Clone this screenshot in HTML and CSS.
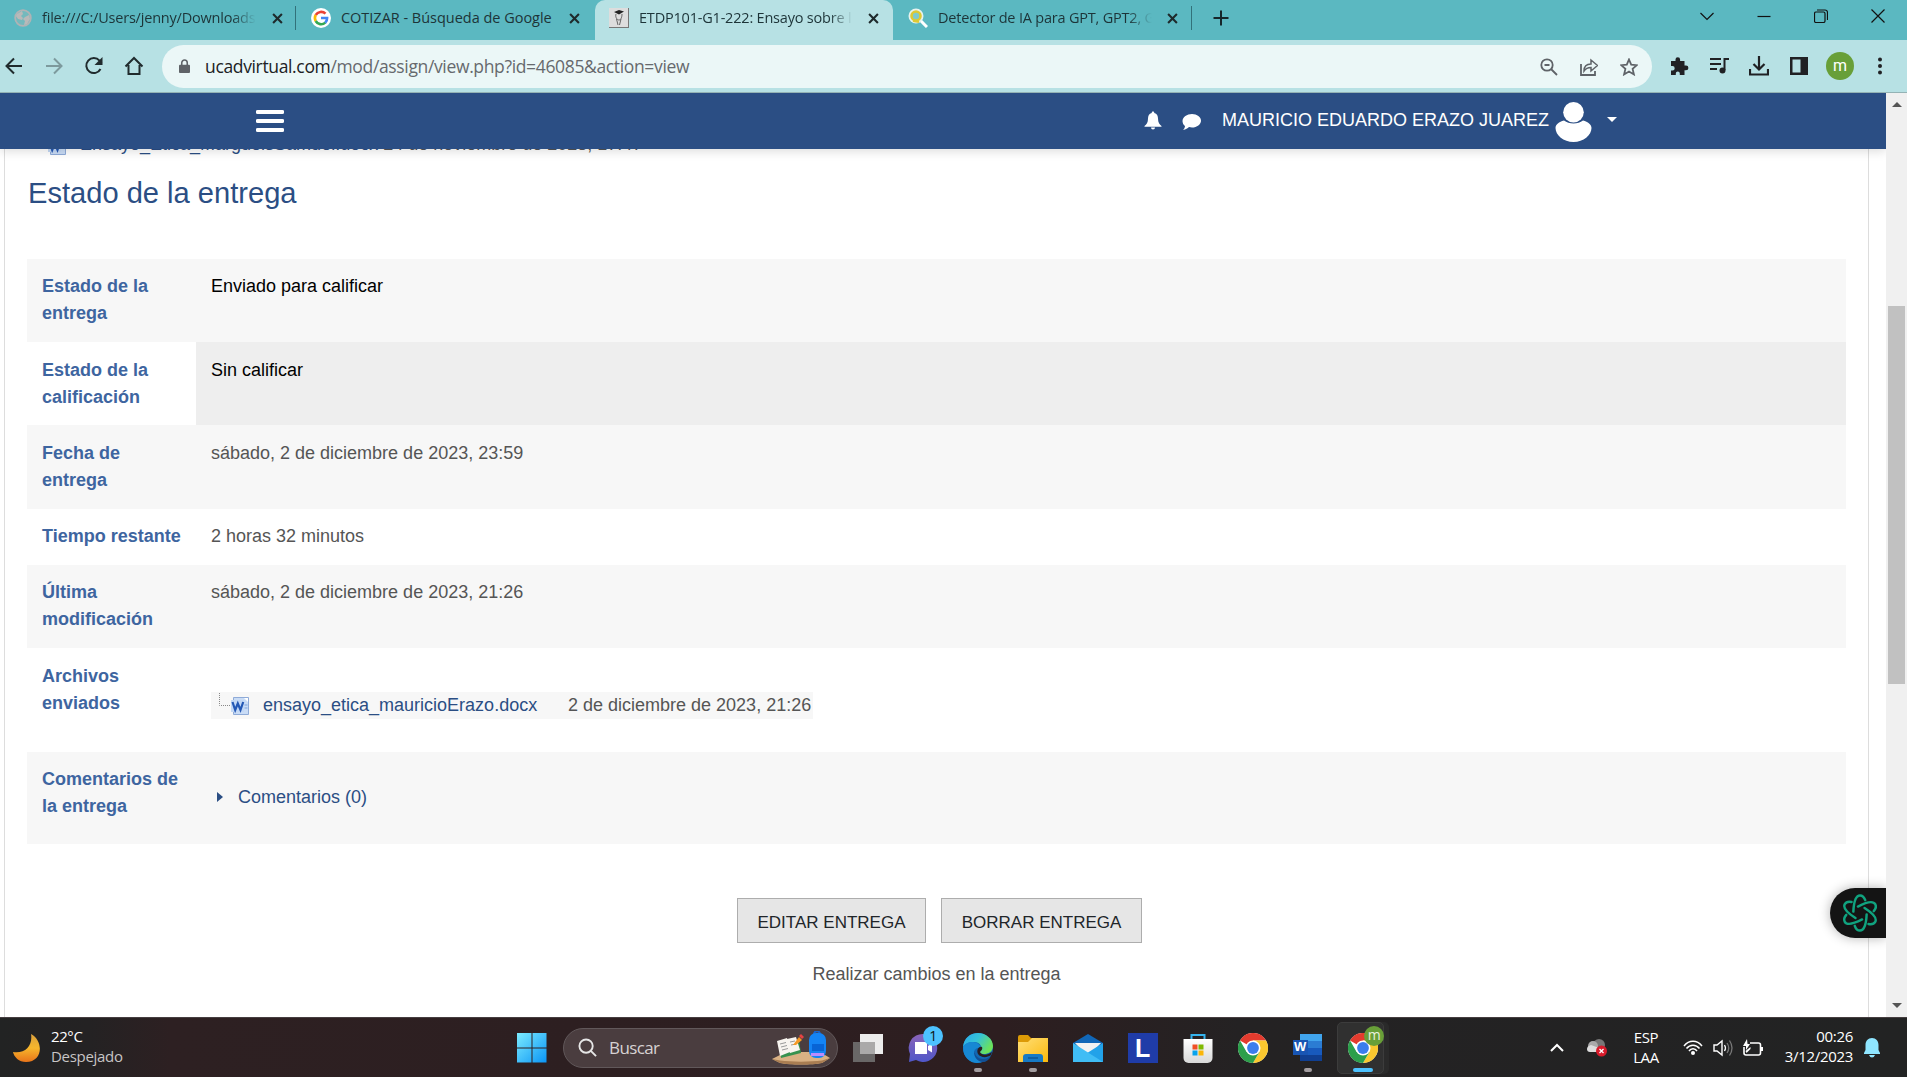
FILE: index.html
```html
<!DOCTYPE html>
<html lang="es">
<head>
<meta charset="utf-8">
<title>ETDP101-G1-222: Ensayo sobre</title>
<link rel="stylesheet" href="styles.css">
</head>
<body>
<svg width="0" height="0" class="defs">
  <defs>
    <linearGradient id="moon" x1="0" y1="0" x2="0" y2="1"><stop offset="0" stop-color="#d9a03c"/><stop offset=".5" stop-color="#f6b62c"/><stop offset="1" stop-color="#e8741a"/></linearGradient>
    <linearGradient id="win" x1="0" y1="0" x2="1" y2="1"><stop offset="0" stop-color="#7cecff"/><stop offset="1" stop-color="#0a94f5"/></linearGradient>
    <linearGradient id="chat" x1="0" y1="0" x2="0" y2="1"><stop offset="0" stop-color="#8a63b8"/><stop offset="1" stop-color="#5057c9"/></linearGradient>
    <linearGradient id="edgeTop" x1="0" y1="0" x2="1" y2=".5"><stop offset="0" stop-color="#2aa8ee"/><stop offset=".5" stop-color="#35c3d8"/><stop offset="1" stop-color="#6be25a"/></linearGradient>
    <linearGradient id="folder" x1="0" y1="0" x2="1" y2="1"><stop offset="0" stop-color="#ffdf78"/><stop offset="1" stop-color="#fbb90d"/></linearGradient>
    <linearGradient id="store" x1="0" y1="0" x2="0" y2="1"><stop offset="0" stop-color="#fff"/><stop offset="1" stop-color="#d8d8d8"/></linearGradient>
    <symbol id="chrome" viewBox="0 0 30 30">
      <circle cx="15" cy="15" r="15" fill="#fff"/>
      <path d="M15 15 2 7.500A15 15 0 0 1 28 7.500H15Z" fill="#e33b2e"/>
      <path d="M28 7.500A15 15 0 0 1 15 30L21.500 18.700 15 7.500Z" fill="#fbc82f"/>
      <path d="M2 7.500A15 15 0 0 0 15 30L21.500 18.700 8.500 18.700Z" fill="#2c9f4b"/>
      <circle cx="15" cy="15" r="7.500" fill="#fff"/><circle cx="15" cy="15" r="5.900" fill="#3b7ded"/>
    </symbol>
    <symbol id="close" viewBox="0 0 10 10"><path d="M1 1l8 8M9 1l-8 8" stroke="#1e2a2c" stroke-width="1.900"/></symbol>
    <symbol id="worddoc" viewBox="0 0 18 18">
      <path d="M2.500.5h15v17h-15z" fill="#c9dcf6" stroke="#8fabd8"/><path d="M13 1h4v4z" fill="#fff"/><path d="M13.500 8h3M13.500 11h3" stroke="#7fa4dd"/>
      <path d="M0 3h13v12H0z" fill="#c3d8f5"/><path d="M1.500 5l2.700 8 2.600-6.500L9.500 13l2.700-8" fill="none" stroke="#2458b5" stroke-width="2.200"/>
    </symbol>
  </defs>
</svg>

<header class="browser">
  <div class="tabs">
    <div class="tab first">
      <svg class="fav" viewBox="0 0 18 18"><circle cx="9" cy="9" r="7.800" fill="#74b9bd" stroke="#b0b3b5" stroke-width="1.800"/><path d="M3 5l5-3 1 3-2 2 2 2-1 2-4-1-2-3zM11 8l4-2 1 4-3 5-3 1 1-4-2-2z" fill="#b9b9b9"/></svg>
      <span class="tab-title t1">file:///C:/Users/jenny/Downloads</span><svg class="x"><use href="#close"/></svg>
    </div>
    <div class="tab">
      <svg class="fav big" viewBox="0 0 20 20"><circle cx="10" cy="10" r="10" fill="#fff"/><g fill="none" stroke-width="2.600"><path d="M4.700 7A6.200 6.200 0 0 1 14.500 5.700" stroke="#ea4335"/><path d="M4.700 7a6.200 6.200 0 0 0 0 6" stroke="#fbbc05"/><path d="M4.700 13a6.200 6.200 0 0 0 9.600 1.600" stroke="#34a853"/><path d="M10 10h6.100a6.200 6.200 0 0 1-1.900 4.700" stroke="#4285f4"/></g></svg>
      <span class="tab-title t2">COTIZAR - Búsqueda de Google</span><svg class="x"><use href="#close"/></svg>
    </div>
    <div class="tab active">
      <svg class="fav big" viewBox="0 0 20 20"><path d="M0 0h20v20H0z" fill="#ddd"/><path d="M0 19.500h20M19.500 0v20" stroke="#777"/><path d="M5 4l5-2 5 1.500-5 3z" fill="#222"/><path d="M7 6c-1 3 1 6 3 6s3-3 3-6M7.500 11l1.500 6M12 11l-1.500 6" fill="none" stroke="#666"/></svg>
      <span class="tab-title t3">ETDP101-G1-222: Ensayo sobre l</span><svg class="x"><use href="#close"/></svg>
    </div>
    <div class="tab last">
      <svg class="fav big" viewBox="0 0 20 20"><path d="M12 12l7 7" stroke="#fff" stroke-width="3"/><circle cx="8" cy="8" r="7.500" fill="#e7f3ef"/><circle cx="8" cy="8" r="4.500" fill="#7fcaca" stroke="#ddc934" stroke-width="2.600"/><path d="M5 13l6 1" stroke="#ddc934" stroke-width="2"/></svg>
      <span class="tab-title t4">Detector de IA para GPT, GPT2, G</span><svg class="x"><use href="#close"/></svg>
    </div>
    <svg class="newtab" viewBox="0 0 16 16"><path d="M8 .5v15M.5 8h15" stroke="#16262a" stroke-width="2"/></svg>
    <div class="winctl">
      <svg viewBox="0 0 14 14"><path d="M.5 4l6.500 6.500L13.500 4"/></svg>
      <svg viewBox="0 0 14 14"><path d="M.5 7.500h13"/></svg>
      <svg viewBox="0 0 14 14"><rect x=".5" y="3" width="10.500" height="10.500" rx="1.500"/><path d="M3 1h8a2.500 2.500 0 0 1 2.500 2.500v7.500"/></svg>
      <svg viewBox="0 0 14 14"><path d="M.5.5l13 13M13.500.5l-13 13"/></svg>
    </div>
  </div>

  <div class="toolbar">
    <div class="nav-icons">
      <svg viewBox="0 0 20 20"><path d="M18 10H3M10 2.500L2.500 10l7.500 7.500"/></svg>
      <svg viewBox="0 0 20 20" class="dim"><path d="M2 10h15M10 2.500l7.500 7.500-7.500 7.500"/></svg>
      <svg viewBox="0 0 20 20"><path d="M16.500 13A7.500 7.500 0 1 1 15.500 4.700L17.500 7"/><path d="M18.500 1v8h-8z" fill="#202b2d" stroke="none"/></svg>
      <svg viewBox="0 0 20 20"><path d="M1.500 10.500L10 2l8.500 8.500M4.500 9v9h11V9"/></svg>
    </div>
    <div class="omnibox">
      <svg class="lock" viewBox="0 0 12 16"><path d="M1 6h10a1 1 0 0 1 1 1v7a1 1 0 0 1-1 1H1a1 1 0 0 1-1-1V7a1 1 0 0 1 1-1z" fill="#5f6368"/><path d="M3 7V4a3 3 0 0 1 6 0v3" fill="none" stroke="#5f6368" stroke-width="1.700"/></svg>
      <span class="url"><b>ucadvirtual.com</b>/mod/assign/view.php?id=46085&amp;action=view</span>
      <span class="omni-icons">
        <svg viewBox="0 0 18 18"><circle cx="7" cy="7" r="5.700"/><path d="M11 11l6 6M4.500 7h5"/></svg>
        <svg viewBox="0 0 18 18"><path d="M1 6v11h14v-4"/><path d="M4 13c0-5 3-7 7-7V2l6.500 5.500L11 13V9.500c-3 0-5 .5-7 3.500z" stroke-width="1.500"/></svg>
        <svg viewBox="0 0 18 18"><path d="M9 1.500l2.200 5.200 5.600.5-4.200 3.700 1.300 5.500L9 13.500l-4.900 2.900 1.300-5.500L1.200 7.200l5.600-.5z"/></svg>
      </span>
    </div>
    <div class="ext-icons">
      <svg viewBox="0 0 20 20"><path d="M2 5h4.500V3.500a2.300 2.300 0 0 1 4.600 0V5h4.400v4.500H17a2.400 2.400 0 0 1 0 4.800h-1.500V19h-4.700v-1.500a2 2 0 0 0-4 0V19H2v-4.500h1.500a2.200 2.200 0 0 0 0-4.400H2z" fill="#202124"/></svg>
      <svg viewBox="0 0 20 20"><path d="M1 3h11M1 8h11M1 13h7M15.500 14V3H20" fill="none" stroke="#202124" stroke-width="2"/><circle cx="13.500" cy="14.500" r="3" fill="#202124"/></svg>
      <svg viewBox="0 0 20 20"><path d="M10 0v13M4.500 8l5.500 5.500L15.500 8M1 13v5.500h18V13" fill="none" stroke="#202124" stroke-width="2.200"/></svg>
      <svg viewBox="0 0 20 20"><path d="M1 1h18v18H1zM3.500 3.500v13h8v-13z" fill="#202124" fill-rule="evenodd"/></svg>
      <span class="profile">m</span>
      <svg viewBox="0 0 20 20"><g fill="#202124"><circle cx="10" cy="3.500" r="2"/><circle cx="10" cy="10" r="2"/><circle cx="10" cy="16.500" r="2"/></g></svg>
    </div>
  </div>
</header>

<div class="viewport">
  <main class="page">
    <nav class="navbar">
      <svg class="burger" viewBox="0 0 28 22"><path d="M1.500 2h25M1.500 11h25M1.500 20h25" stroke="#fff" stroke-width="3.800" stroke-linecap="round"/></svg>
      <svg class="bell" viewBox="0 0 18 18"><path d="M9 0c1 0 1.300.7 1.300 1.400C13 2 14 4.500 14 7c0 4 1.500 6 3.500 7.500v.8H.5v-.8C2.500 13 4 11 4 7c0-2.500 1-5 3.700-5.600C7.700.7 8 0 9 0zM7 16h4a2 2 0 0 1-4 0z" fill="#fff"/></svg>
      <svg class="bubble" viewBox="0 0 19 16"><path d="M10 0c5 0 9 3 9 6.700s-4 6.800-9 6.800c-1 0-2-.1-3-.4C5.500 14.500 4 15.700 1 16c1-1 2-2.500 2-4-1.700-1.300-2.500-3.200-2.500-5C.5 3 5 0 10 0z" fill="#fff"/></svg>
      <span class="user">MAURICIO EDUARDO ERAZO JUAREZ</span>
      <svg class="avatar" viewBox="0 0 37 40"><circle cx="18.500" cy="10.300" r="10.300" fill="#fff"/><path d="M9 18.500c5 4 14 4 19 0 5 1.500 8.500 4 8.500 7.500C36.500 33 28.500 40 18.500 40S.5 33 .5 26c0-3.500 3.500-6 8.500-7.500z" fill="#fff"/></svg>
      <span class="caret"></span>
    </nav>

    <section class="sheet">
      <div class="prev-file"><svg><use href="#worddoc"/></svg><span><a>Ensayo_Etica_MarguelsSamuel.docx</a> 24 de noviembre de 2023, 17:47</span></div>
      <h3>Estado de la entrega</h3>
      <div class="status">
        <div class="row r2 odd"><div class="th">Estado de la entrega</div><div class="td black">Enviado para calificar</div></div>
        <div class="row r2"><div class="th">Estado de la calificación</div><div class="td black gray">Sin calificar</div></div>
        <div class="row r2 odd"><div class="th">Fecha de entrega</div><div class="td">sábado, 2 de diciembre de 2023, 23:59</div></div>
        <div class="row r1"><div class="th">Tiempo restante</div><div class="td">2 horas 32 minutos</div></div>
        <div class="row r2 odd"><div class="th">Última modificación</div><div class="td">sábado, 2 de diciembre de 2023, 21:26</div></div>
        <div class="row files"><div class="th">Archivos enviados</div><div class="td">
          <div class="file"><svg class="branch" viewBox="0 0 12 27"><path d="M.5 1v12.500H12" fill="none" stroke="#888" stroke-dasharray="1 1"/></svg><svg class="doc"><use href="#worddoc"/></svg><a>ensayo_etica_mauricioErazo.docx</a><span>2 de diciembre de 2023, 21:26</span></div>
        </div></div>
        <div class="row comments odd"><div class="th">Comentarios de la entrega</div><div class="td"><div class="comment"><i></i><a>Comentarios (0)</a></div></div></div>
      </div>
      <div class="actions"><button>EDITAR ENTREGA</button><button>BORRAR ENTREGA</button></div>
      <p class="hint">Realizar cambios en la entrega</p>
    </section>
    <div class="gpt"><svg viewBox="-20 -20 40 40"><g fill="none" stroke="#10a37f" stroke-width="2.600" stroke-linecap="round">
      <path id="petal" d="M-7-1.500C-6.500-12-4-18.500 0-18.500 2.500-18.500 4.500-16.500 5.500-13.500"/><use href="#petal" transform="rotate(60)"/><use href="#petal" transform="rotate(120)"/><use href="#petal" transform="rotate(180)"/><use href="#petal" transform="rotate(240)"/><use href="#petal" transform="rotate(300)"/></g></svg></div>
  </main>
  <aside class="scroll"><i class="up"></i><div class="thumb"></div><i class="down"></i></aside>
</div>

<footer class="taskbar">
  <div class="weather">
    <svg viewBox="0 0 28 28"><path d="M18 0C31 7 30 28 13 28 6 28 1 23 0 18 12 20 20 12 18 0z" fill="url(#moon)"/></svg>
    <div>22°C<br><span>Despejado</span></div>
  </div>
  <div class="slot start"><svg viewBox="0 0 30 30"><path d="M0 0h14.500v14.500H0zM15.500 0h14v14.500h-14zM0 15.500h14.500v14H0zM15.500 15.500h14v14h-14z" fill="url(#win)"/></svg></div>
  <div class="search">
    <svg class="glass" viewBox="0 0 20 20"><circle cx="8.500" cy="8.500" r="7" fill="none" stroke="#e6e6e6" stroke-width="2"/><path d="M13.500 13.500l5.500 5.500" stroke="#e6e6e6" stroke-width="2"/></svg>
    <span>Buscar</span>
    <svg class="art" viewBox="0 0 58 34"><path d="M0 28l14-7h34l10 6-8 5c-10 2-32 2-42 0z" fill="#d9b184"/><path d="M0 28l8 4c10 2 32 2 42 0l8-5-8 2.500c-12 1.500-30 1.500-42 0z" fill="#a97d52"/><path d="M7 13l20-4 2 13-20 5z" fill="#36924f"/><path d="M5 10l10-3 3 14-10 4zM15 8l9-2 4 13-10 3z" fill="#f7f4ef"/><path d="M8 13l6-1.500M9 16l6-1.500M10 19l6-1.500M18 11l5-1M19 14l5-1" stroke="#999"/><path d="M21 14l6-8 3 3-6 5z" fill="#f59a26"/><path d="M27 5l2-2 3 3-2 2z" fill="#e74242"/><path d="M42 4c0-5 6-5 6 0" fill="none" stroke="#1865cf" stroke-width="2"/><rect x="37" y="2" width="17" height="25" rx="7" fill="#1484f4"/><path d="M40 13h12v7H40z" fill="#0864d5"/><path d="M39 22h13v3H39z" fill="#b98cff"/></svg>
  </div>
  <div class="apps">
    <div class="slot"><svg viewBox="0 0 30 30"><path d="M7 1h23v20H7z" fill="#ececec"/><path d="M0 9h22v20H0z" fill="#696767"/><path d="M7 9h15v12H7z" fill="#aaa9a9"/></svg></div>
    <div class="slot"><svg viewBox="0 0 30 30"><path d="M15 1a14 14 0 1 1-7 26l-7 2 1-8A14 14 0 0 1 15 1z" fill="url(#chat)"/><path d="M7 9h12v12H7zM20 13l4-2.500v9L20 17z" fill="#fff"/></svg><b class="badge">1</b></div>
    <div class="slot run"><svg viewBox="0 0 30 30"><circle cx="15" cy="15" r="15" fill="#1268b3"/><path d="M0 14C1 5 7 0 15 0s15 6 15 13c0 6-5 8-9 8-3 0-5-1-4-3 3-4 0-9-6-9C6 9 2 11 0 14z" fill="url(#edgeTop)"/><path d="M0 14c2-4 6-5.500 10-5 5 .3 9 4 8 8-1-2-4-3-6 0-2 4 2 11 9 11-9 5-21 0-21-14z" fill="#1788d4"/><path d="M12 16c-2 5 3 10 8 10 4 0 6-2 8-3-2 4-5 6-8 6-6 0-11-7-8-13z" fill="#124f94"/><path d="M19 14c1 2-1 4-2 5 2 4 8 3 12 0l-1 3c-4 3-10 3-13-1-2-4 1-8 4-7z" fill="#2b1e20"/></svg></div>
    <div class="slot run"><svg viewBox="0 0 30 30"><path d="M0 4q0-2 2-2h8l3 3h6v8H0z" fill="#dc9a06"/><path d="M0 9h10l4-4h16v24H0z" fill="url(#folder)"/><path d="M5 29v-5q0-3 3-3h14q3 0 3 3v5z" fill="#167ac6"/><path d="M10 25h10" stroke="#0c5796" stroke-width="1.500"/></svg></div>
    <div class="slot"><svg viewBox="0 0 30 30"><path d="M0 10L15 1l15 9v9H0z" fill="#1167b8"/><path d="M2 10h26L15 24z" fill="#f2f2f2"/><path d="M30 10v19H0z" fill="#22a2e9"/><path d="M0 10l30 19H0z" fill="#40bdf5"/></svg></div>
    <div class="slot"><svg viewBox="0 0 30 30"><path d="M0 0h30v30H0z" fill="#1f3ca8"/><path d="M8 22l4-16v13z" fill="#082d57"/></svg><b class="ell">L</b></div>
    <div class="slot"><svg viewBox="0 0 30 30"><path d="M8.500 8V2h13v6" fill="none" stroke="#35b4ee" stroke-width="2"/><path d="M.5 6h29v19a5 5 0 0 1-5 5h-19a5 5 0 0 1-5-5z" fill="url(#store)"/><path d="M9.500 11.500h5v5h-5z" fill="#f04f25"/><path d="M15.500 11.500h5v5h-5z" fill="#7fb900"/><path d="M9.500 17.500h5v5h-5z" fill="#09a3ec"/><path d="M15.500 17.500h5v5h-5z" fill="#fbb608"/></svg></div>
    <div class="slot"><svg><use href="#chrome"/></svg></div>
    <div class="slot run"><svg viewBox="0 0 30 30"><path d="M7 1h22v7H7z" fill="#41a5ee"/><path d="M7 8h22v7H7z" fill="#2b7cd3"/><path d="M7 15h22v7H7z" fill="#185abd"/><path d="M7 22h22v6H7z" fill="#103f91"/><path d="M0 7h15v15H0z" fill="#1855b3"/></svg><b class="w">W</b></div>
    <div class="slot current"><svg><use href="#chrome"/></svg><b class="mbadge">m</b></div>
  </div>
  <div class="tray">
    <svg class="chev" viewBox="0 0 14 9"><path d="M1 8l6-6 6 6" fill="none" stroke="#fff" stroke-width="2"/></svg>
    <svg class="cloud" viewBox="0 0 20 18"><circle cx="12" cy="6" r="6" fill="#777"/><circle cx="6" cy="7" r="5" fill="#aaa"/><path d="M0 10q0-3 4-4l11 4v3H3q-3 0-3-3z" fill="#ddd"/><circle cx="14.500" cy="12" r="5.500" fill="#d81b2b"/><path d="M12.500 10l4 4m0-4l-4 4" stroke="#fff" stroke-width="1.300"/></svg>
    <div class="lang">ESP<br>LAA</div>
    <svg class="wifi" viewBox="0 0 20 16"><g fill="none" stroke="#fff" stroke-width="1.500"><path d="M1 6C6-.3 14-.3 19 6M3.500 8.500C7 4 13 4 16.500 8.500M6 11C8 8 12 8 14 11"/></g><circle cx="10" cy="13" r="2" fill="#fff"/></svg>
    <svg class="vol" viewBox="0 0 20 18"><path d="M1 6h3l5-4v14l-5-4H1z" fill="none" stroke="#fff" stroke-width="1.400"/><path d="M11.500 6q2 3 0 6" fill="none" stroke="#fff" stroke-width="1.300"/><path d="M14 4q3.500 5 0 10M16.500 1.500q5 7.500 0 15" fill="none" stroke="#777" stroke-width="1.300"/></svg>
    <svg class="bat" viewBox="0 0 20 18"><path d="M7 4h8.500q2 0 2 2v8q0 2-2 2H3q-2 0-2-2V8" fill="none" stroke="#fff" stroke-width="1.600"/><path d="M18 8h2v4h-2zM4 0L0 7h3v4l4-6H4.500zM2.500 12l5-4v2l-4 4z" fill="#fff"/></svg>
    <div class="clock">00:26<br>3/12/2023</div>
    <svg class="tbell" viewBox="0 0 16 20"><path d="M8 0c4 0 6.500 3 6.500 7v5l1.500 3v1H0v-1l1.500-3V7C1.500 3 4 0 8 0zM5 17h6q-1 2.500-3 2.500T5 17z" fill="#8fe6ff"/></svg>
  </div>
</footer>
</body>
</html>
```
FILE: styles.css
```css
* { box-sizing: border-box; }
body {
  margin: 0; width: 1907px; height: 1077px; overflow: hidden;
  display: flex; flex-direction: column;
  font-family: "Liberation Sans", Arial, sans-serif; background: #fff;
}
svg { display: block; flex: none; }
.defs { position: absolute; }

/* browser chrome */
.browser { height: 93px; flex: none; font-family: "Open Sans", "Noto Sans", sans-serif; border-bottom: 1px solid #94b3b5; }
.tabs { height: 40px; background: #5bb8c1; display: flex; align-items: flex-start; }
.tab { width: 298px; height: 40px; padding: 0 14px 4px 25px; display: flex; align-items: center; border-right: 1px solid transparent; }
.tab.first { width: 297px; padding: 0 13px 4px 14px; background: linear-gradient(#32717a, #32717a) right 0 top 6px / 1px 24px no-repeat; }
.tab.last { width: 300px; padding-right: 14px; padding-left: 26px; background: linear-gradient(#32717a, #32717a) right 0 top 6px / 1px 24px no-repeat; }
.tab.active { background: #b7e1e4; border-radius: 10px 10px 0 0; padding-right: 13px; }
.fav { width: 18px; height: 18px; margin-right: 10px; }
.fav.big { width: 20px; height: 20px; margin-right: 10px; margin-left: -11px; }
.tab-title { flex: none; width: 216px; font-size: 14.500px; color: #1d3438; white-space: nowrap; overflow: hidden; line-height: 22px; letter-spacing: -.2px; }
.t2 { letter-spacing: -.02px; }
.t1, .t3, .t4 { -webkit-mask-image: linear-gradient(90deg, #000 88%, transparent 99%); }
.x { width: 11px; height: 11px; margin-left: auto; }
.newtab { width: 16px; height: 16px; margin: 10px 0 0 20px; }
.winctl { margin: 9px 22px 0 auto; display: flex; gap: 43px; }
.winctl svg { width: 14px; height: 14px; fill: none; stroke: #111; stroke-width: 1.200; }
.toolbar { height: 52px; background: #b7e1e4; display: flex; align-items: center; }
.nav-icons { display: flex; width: 162px; padding-left: 4px; gap: 20px; }
.nav-icons svg { width: 20px; height: 20px; fill: none; stroke: #202b2d; stroke-width: 2; }
.nav-icons .dim { stroke: #7d9a9d; }
.omnibox { width: 1490px; height: 43px; border-radius: 22px; background: #ebf7f7; display: flex; align-items: center; padding: 0 14px 0 17px; }
.lock { width: 11px; height: 15px; }
.url { margin-left: 15px; font-size: 17.500px; color: #66696d; letter-spacing: -.35px; white-space: nowrap; line-height: 24px; }
.url b { font-weight: 400; color: #202124; }
.omni-icons { margin-left: auto; display: flex; gap: 22px; margin-top: 1px; }
.omni-icons svg { width: 18px; height: 18px; fill: none; stroke: #5f6368; stroke-width: 1.800; }
.ext-icons { display: flex; align-items: center; gap: 20px; margin-left: 17px; }
.ext-icons svg { width: 20px; height: 20px; }
.ext-icons svg:last-child { margin-left: -1px; }
.profile { width: 28px; height: 28px; margin: 0 -3px; border-radius: 50%; background: #689f38; color: #fff; text-align: center; font: 16px/27px Roboto, sans-serif; }

/* page */
.viewport { height: 924px; display: flex; }
.page { width: 1886px; position: relative; overflow: hidden; }
.navbar { position: relative; z-index: 1; height: 56px; background: #2b4e84; display: flex; align-items: center; padding: 0 0 1px 256px; box-shadow: 0 2px 10px rgba(0,0,0,.15); color: #fff; }
.burger { width: 28px; height: 22px; }
.bell { width: 18px; height: 19px; margin-left: 860px; }
.bubble { width: 19px; height: 16px; margin: 2px 20px 0 20px; }
.user { width: 329px; font-size: 18px; line-height: 24px; white-space: nowrap; letter-spacing: 0; margin: -2px 0 0 1px; }
.avatar { width: 37px; height: 40px; margin: 2px 15px 0 4px; }
.caret { border: 5px solid transparent; border-top-color: #fff; border-bottom: 0; margin-top: -3px; }
.sheet { margin: 0 17px 0 4px; height: 886px; border: 1px solid #ddd; border-width: 0 1px; padding: 0 22px; color: #555; font-size: 18px; line-height: 27px; }
.prev-file { height: 26px; margin-top: -18px; padding-left: 21px; display: flex; align-items: center; gap: 14px; white-space: nowrap; }
.prev-file svg { width: 18px; height: 18px; margin-top: 3px; }
.prev-file a { color: #2b4e84; }
h3 { margin: 18px 0 47px; padding-left: 1px; font-size: 29.100px; line-height: 37px; font-weight: 400; color: #2b4e84; }
.status { width: 1819px; }
.row { display: flex; }
.odd { background: #f7f7f7; }
.r2 { height: 83.200px; }
.r1 { height: 56px; }
.files { height: 104px; }
.comments { height: 92px; }
.th { width: 169px; padding: 14.400px 12px 0 15px; font-weight: 700; color: #3e65a0; }
.files .th { padding-top: 15px; }
.td { flex: 1; padding: 14.400px 15px 0; }
.black { color: #000; }
.gray { background: #eee; }
a { color: #2b4e84; }
.file { margin-top: 31px; width: 602px; height: 27px; background: #f7f7f7; display: flex; align-items: center; padding-left: 8px; white-space: nowrap; }
.files .td { padding-top: 13px; }
.branch { width: 12px; height: 27px; }
.doc { width: 18px; height: 18px; margin-top: 1px; }
.file a { width: 319px; padding-left: 14px; }
.comment { margin-top: 18px; display: flex; align-items: center; }
.comment i { border: 5px solid transparent; border-left: 6px solid #2b4e84; border-right: 0; margin: -1px 15px 0 6px; }
.actions { margin: 54px 0 0 710px; display: flex; gap: 15px; }
button { height: 45px; width: 189px; padding: 5px 0 0; border: 1px solid #adadad; background: #e6e6e6; font: 17px/24px "Liberation Sans", Arial, sans-serif; color: #212529; }
button + button { width: 201px; }
.hint { margin: 18px 0 0; text-align: center; width: 1819px; }
.gpt { position: absolute; right: 0; top: 795px; width: 56px; height: 50px; border-radius: 25px 0 0 25px; background: #141414; box-shadow: 0 0 12px rgba(0,0,0,.3); padding: 6px 0 0 11px; }
.gpt svg { width: 38px; height: 38px; }
.scroll { width: 21px; background: #f0f0f0; padding: 9px 2px 9px; display: flex; flex-direction: column; align-items: center; }
.scroll i { border: 5px solid transparent; }
.scroll .up { border-bottom-color: #555; border-top: 0; }
.scroll .down { border-top-color: #555; border-bottom: 0; margin-top: auto; }
.thumb { width: 17px; height: 378px; background: #c1c1c1; margin-top: 199px; }

/* taskbar */
.taskbar { height: 60px; border-top: 1px solid #463e40; background: linear-gradient(90deg, #222323 0, #242223 90px, #2d2022 170px, #2d1e20 1000px, #242223 1240px, #222323 1907px); display: flex; align-items: center; color: #fff; font: 15px/20px "Open Sans", "Noto Sans", sans-serif; letter-spacing: -.4px; }
.weather { width: 504px; padding-left: 13px; display: flex; gap: 10px; align-items: center; }
.weather svg { width: 28px; height: 28px; }
.weather div { margin-top: -4px; }
.weather span { color: #c8c5c5; letter-spacing: -.3px; }
.slot { position: relative; width: 55px; height: 59px; display: flex; align-items: center; justify-content: center; }
.slot > svg { width: 30px; height: 30px; }
.search { width: 275px; height: 40px; margin-left: 4px; border: 1px solid #61585a; border-radius: 20px; background: #4a3d3f; display: flex; align-items: center; padding: 0 7px 0 14px; font-size: 17px; color: #d7d2d3; }
.search .glass { width: 19px; height: 19px; margin-right: 12px; }
.search span { letter-spacing: -.6px; }
.art { width: 58px; height: 34px; margin-left: auto; }
.apps { display: flex; margin-left: 2px; }
.run::after, .current::after { content: ""; position: absolute; bottom: 5px; width: 8px; height: 4px; border-radius: 2px; background: #a39da0; }
.current::before { content: ""; position: absolute; left: 2px; top: 4px; width: 45px; height: 50px; border-radius: 5px; background: #303030; border: 1px solid #3c3c3c; box-shadow: 5px 0 0 #2a2a2a; }
.current > svg { position: relative; }
.current::after { width: 20px; background: #4cc2ff; }
.badge, .mbadge { position: absolute; width: 20px; height: 20px; border-radius: 50%; background: #4cc2ff; color: #111; text-align: center; font-weight: 400; font-size: 14px; left: 28px; top: 8px; }
.mbadge { background: #689f38; color: #e8f2df; line-height: 18px; font-size: 14px; left: 29px; }
.ell, .w { position: absolute; color: #fff; font: 700 25px/30px "Liberation Sans", Arial, sans-serif; }
.w { font-size: 13px; left: 14px; top: 14px; }
.tray { margin-left: auto; display: flex; align-items: center; text-align: center; }
.chev { width: 14px; height: 9px; }
.cloud { width: 20px; height: 18px; margin: 0 24px 0 23px; }
.lang { width: 30px; margin-top: -2px; }
.wifi { width: 20px; height: 16px; margin-left: 22px; }
.vol { width: 20px; height: 18px; margin: 0 10px; }
.bat { width: 20px; height: 18px; }
.clock { width: 80px; text-align: right; margin: -4px 0 0 10px; letter-spacing: -.3px; }
.tbell { width: 16px; height: 20px; margin: 0 27px 0 11px; }
```
